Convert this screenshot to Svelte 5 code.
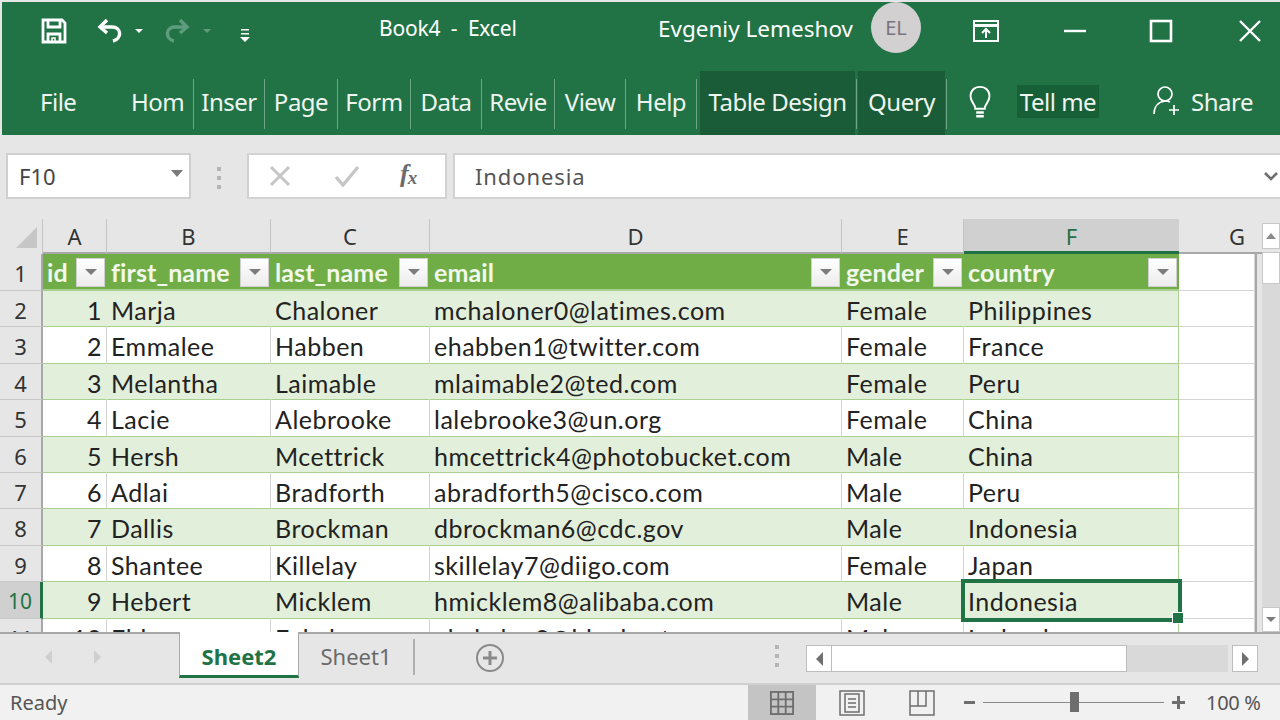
<script>
	const cols = [
		{ l: 'A', w: 64 }, { l: 'B', w: 164 }, { l: 'C', w: 159 },
		{ l: 'D', w: 412 }, { l: 'E', w: 122 }, { l: 'F', w: 215 }, { l: 'G', w: 76 }
	]
	const heads = ['id', 'first_name', 'last_name', 'email', 'gender', 'country']
	const rows = [
		[1, 'Marja', 'Chaloner', 'mchaloner0@latimes.com', 'Female', 'Philippines'],
		[2, 'Emmalee', 'Habben', 'ehabben1@twitter.com', 'Female', 'France'],
		[3, 'Melantha', 'Laimable', 'mlaimable2@ted.com', 'Female', 'Peru'],
		[4, 'Lacie', 'Alebrooke', 'lalebrooke3@un.org', 'Female', 'China'],
		[5, 'Hersh', 'Mcettrick', 'hmcettrick4@photobucket.com', 'Male', 'China'],
		[6, 'Adlai', 'Bradforth', 'abradforth5@cisco.com', 'Male', 'Peru'],
		[7, 'Dallis', 'Brockman', 'dbrockman6@cdc.gov', 'Male', 'Indonesia'],
		[8, 'Shantee', 'Killelay', 'skillelay7@diigo.com', 'Female', 'Japan'],
		[9, 'Hebert', 'Micklem', 'hmicklem8@alibaba.com', 'Male', 'Indonesia'],
		[10, 'Eldon', 'Eykelen', 'ekykelen9@bluehost.com', 'Male', 'Iceland']
	]
	const tabs = [
		['Hom', 72], ['Inser', 71], ['Page', 73], ['Form', 73], ['Data', 71], ['Revie', 73], ['View', 71], ['Help', 71]
	]
</script>

<div class="win">
	<header class="title">
		<div class="qat">
			<svg class="save" width="26" height="26" viewBox="0 0 26 26" fill="none" stroke="#fff" stroke-width="2.8">
				<path d="M2 2h19l3 3v19H2z" />
				<path d="M7 3v6h12V3M7 24v-8h12v8" />
				<path d="M11 24v-4h3v4" stroke-width="1.5" />
			</svg>
			<svg class="undo" width="28" height="26" viewBox="0 0 28 26" fill="none" stroke="#fff" stroke-width="3.400">
				<path d="M11 2 4 9l7 6" />
				<path d="M4 9h12c10 0 10 12 1 14" />
			</svg>
			<i class="tri small"></i>
			<svg class="redo" width="28" height="26" viewBox="0 0 28 26" fill="none" stroke="#5f9c7d" stroke-width="3.400">
				<path d="m17 2 7 7-7 6" />
				<path d="M24 9H12c-10 0-10 12-1 14" />
			</svg>
			<i class="tri small dim"></i>
			<svg class="more" width="12" height="14" viewBox="0 0 12 14" fill="#fff">
				<path d="M2 1h8v1.500H2zM2 5h8v1.500H2zM1 9h10l-5 5z" />
			</svg>
		</div>
		<div class="book">Book4 &nbsp;-&nbsp; Excel</div>
		<div class="user">Evgeniy Lemeshov</div>
		<div class="avatar">EL</div>
		<div class="wctl">
			<svg width="28" height="24" viewBox="0 0 28 24" fill="none" stroke="#fff" stroke-width="2">
				<rect x="2" y="2" width="24" height="20" />
				<path d="M2 6.500h24" stroke-width="3" />
				<path d="M14 19v-8M10 14l4-4 4 4" />
			</svg>
			<svg class="mn" width="22" height="4" viewBox="0 0 22 4"><path d="M0 2h22" stroke="#fff" stroke-width="2.400" /></svg>
			<svg class="mx" width="24" height="24" viewBox="0 0 24 24" fill="none" stroke="#fff" stroke-width="2.600"><rect x="2" y="2" width="20" height="20" /></svg>
			<svg class="cl" width="22" height="22" viewBox="0 0 22 22" fill="none" stroke="#fff" stroke-width="2.400"><path d="m1 1 20 20M21 1 1 21" /></svg>
		</div>
	</header>

	<nav class="ribbon">
		<span class="file">File</span>
		<div class="tabs">
			{#each tabs as [name, w]}
				<span class="tab" style="width:{w}px">{name}</span>
			{/each}
		</div>
		<span class="ctx first">Table Design</span>
		<i class="vsep"></i>
		<span class="ctx second">Query</span>
		<i class="vsep"></i>
		<svg class="bulb" width="26" height="36" viewBox="0 0 24 38" fill="none" stroke="#fff" stroke-width="2">
			<path d="M7 25c0-5-5-7-5-13C2 6 6 2 12 2s10 4 10 10c0 6-5 8-5 13z" />
			<path d="M8 29h8M8 33h8" stroke-width="2.500" />
		</svg>
		<span class="tell">Tell me</span>
		<svg class="person" width="30" height="32" viewBox="0 0 30 32" fill="none" stroke="#fff" stroke-width="1.700">
			<circle cx="12" cy="9" r="7" />
			<path d="M1 29c0-7 4-12 11-13 2 0 4 .5 5 1" />
			<path d="M21 20v10M16 25h10" />
		</svg>
		<span class="share">Share</span>
	</nav>

	<section class="formula">
		<div class="namebox">
			<span>F10</span>
			<i class="tri grey"></i>
		</div>
		<div class="dots"><b></b><b></b><b></b></div>
		<div class="fxbtns">
			<svg width="22" height="22" viewBox="0 0 22 22" fill="none" stroke="#c6c6c6" stroke-width="3"><path d="m2 2 18 18M20 2 2 20" /></svg>
			<svg width="26" height="22" viewBox="0 0 26 22" fill="none" stroke="#c6c6c6" stroke-width="3.400"><path d="m2 12 7 8L24 2" /></svg>
			<span class="fx">f<sub>x</sub></span>
		</div>
		<div class="fbar">
			<span>Indonesia</span>
			<svg width="14" height="9" viewBox="0 0 14 9" fill="none" stroke="#707070" stroke-width="2.600"><path d="m1 1 6 6 6-6" /></svg>
		</div>
	</section>

	<section class="sheet">
		<div class="colheads">
			<div class="corner"><i></i></div>
			{#each cols as c}
				<div class="ch" class:active={c.l === 'F'} class:last={c.l === 'G'} style="width:{c.l === 'G' ? 83 : c.w}px">{c.l}</div>
			{/each}
			<div class="vup"><i class="tri grey up"></i></div>
		</div>
		<div class="body">
			<div class="rowheads">
				{#each { length: 11 } as _, i}
					<div class="rh" class:first={i === 0} class:active={i === 9}>{i + 1}</div>
				{/each}
			</div>
			<div class="cells">
				<div class="row head">
					{#each heads as h, i}
						<div class="cell" style="width:{cols[i].w}px">
							<span>{h}</span>
							<i class="filter"><i class="tri grey"></i></i>
						</div>
					{/each}
					<div class="cell blank" style="width:{cols[6].w}px"></div>
				</div>
				{#each rows as r, ri}
					<div class="row" class:band={ri % 2 === 0}>
						{#each r as v, i}
							<div class="cell" class:num={i === 0} class:sel={ri === 8 && i === 5} style="width:{cols[i].w}px">
								{v}
								{#if ri === 8 && i === 5}<i class="handle"></i>{/if}
							</div>
						{/each}
						<div class="cell blank" style="width:{cols[6].w}px"></div>
					</div>
				{/each}
			</div>
			<div class="vscroll">
				<div class="thumb"></div>
				<div class="vdown"><i class="tri grey"></i></div>
			</div>
		</div>
	</section>

	<section class="sheetbar">
		<div class="nav">
			<i class="arrow left"></i>
			<i class="arrow right"></i>
		</div>
		<div class="stab on">Sheet2</div>
		<div class="stab">Sheet1</div>
		<svg class="add" width="30" height="30" viewBox="0 0 30 30" fill="none" stroke="#8a8a8a">
			<circle cx="15" cy="15" r="13" stroke-width="2" />
			<path d="M15 8v14M8 15h14" stroke-width="3" />
		</svg>
		<div class="dots hdots"><b></b><b></b><b></b></div>
		<div class="hscroll">
			<div class="hbtn"><i class="arrow left dark"></i></div>
			<div class="hthumb"></div>
			<div class="htrack"></div>
			<div class="hbtn"><i class="arrow right dark"></i></div>
		</div>
	</section>

	<footer class="status">
		<span class="ready">Ready</span>
		<div class="views">
			<div class="view on">
				<svg width="24" height="24" viewBox="0 0 26 26" fill="none" stroke="#6e6e6e" stroke-width="2"><rect x="1" y="1" width="24" height="24" /><path d="M9 1v24M17 1v24M1 9h24M1 17h24" /></svg>
			</div>
			<div class="view p2">
				<svg width="26" height="26" viewBox="0 0 26 26" fill="none" stroke="#6e6e6e" stroke-width="1.500"><rect x="1" y="1" width="24" height="24" /><rect x="6" y="4" width="14" height="18" /><path d="M9 9h8M9 13h8M9 17h8" /></svg>
			</div>
			<div class="view p3">
				<svg width="26" height="26" viewBox="0 0 26 26" fill="none" stroke="#6e6e6e" stroke-width="1.500"><rect x="1" y="1" width="24" height="24" /><path d="M1 16h16V1M9 1v15" /></svg>
			</div>
		</div>
		<div class="zoom">
			<i class="zm"></i>
			<div class="slider"><i></i></div>
			<span class="zp"></span>
		</div>
		<span class="pct">100 %</span>
	</footer>
</div>

<style>
	:global(body) {
		margin: 0;
		background: #e6e6e6;
	}
	.win {
		width: 1280px;
		height: 720px;
		display: flex;
		flex-direction: column;
		overflow: hidden;
		font-family: "Noto Sans", sans-serif;
		background: #e6e6e6;
	}
	.tri {
		display: inline-block;
		width: 0;
		height: 0;
		border-left: 5px solid transparent;
		border-right: 5px solid transparent;
		border-top: 5px solid #fff;
	}
	.tri.small {
		border-left-width: 4px;
		border-right-width: 4px;
		border-top-width: 4px;
	}
	.tri.dim {
		border-top-color: #5f9c7d;
	}
	.tri.grey {
		border-top-color: #7c7c7c;
	}
	.tri.up {
		border-top: 0;
		border-bottom: 6px solid #8a8a8a;
	}

	.title {
		height: 69px;
		margin: 2px 0 0 2px;
		padding-bottom: 12px;
		box-sizing: border-box;
		background: #217346;
		display: flex;
		align-items: center;
		color: #fff;
		flex: none;
	}
	.qat {
		display: flex;
		align-items: center;
		width: 377px;
		padding-left: 39px;
		box-sizing: border-box;
	}
	.undo {
		margin-left: 29px;
	}
	.qat .tri {
		margin-left: 11px;
	}
	.redo {
		margin-left: 20px;
	}
	.qat .tri.dim {
		margin-left: 12px;
	}
	.more {
		margin-left: 28px;
		margin-top: 8px;
	}
	.book {
		width: 279px;
		font-size: 21px;
		letter-spacing: -0.2px;
		margin-bottom: 5px;
	}
	.user {
		width: 213px;
		font-size: 22.500px;
		margin-bottom: 5px;
	}
	.avatar {
		width: 50px;
		height: 51px;
		margin-bottom: 6px;
		border-radius: 50%;
		background: #d2d0d0;
		color: #7a7480;
		display: flex;
		align-items: center;
		justify-content: center;
		font-size: 20px;
	}
	.wctl {
		display: flex;
		align-items: center;
		margin-left: 51px;
	}
	.mn {
		margin-left: 64px;
	}
	.mx {
		margin-left: 63px;
	}
	.cl {
		margin-left: 66px;
	}

	.ribbon {
		height: 64px;
		margin-left: 2px;
		background: #217346;
		display: flex;
		align-items: center;
		color: #eef5f0;
		font-size: 24px;
		letter-spacing: -0.5px;
		flex: none;
	}
	.file {
		width: 120px;
		padding: 0 0 3px 38px;
		box-sizing: border-box;
	}
	.tabs {
		display: flex;
		height: 50px;
		align-items: center;
		margin-top: 2px;
	}
	.tab {
		height: 50px;
		line-height: 46px;
		text-align: center;
		box-sizing: border-box;
		white-space: nowrap;
		overflow: hidden;
		border-right: 1px solid #6da586;
	}
	.vsep {
		width: 1px;
		height: 50px;
		margin: 2px 1px 0;
		background: #6da586;
		flex: none;
	}
	.ctx {
		height: 64px;
		line-height: 61px;
		background: #1b5c38;
		text-align: center;
		white-space: nowrap;
		box-sizing: border-box;
	}
	.ctx.first {
		margin-left: 3px;
		width: 155px;
	}
	.ctx.second {
		width: 87px;
	}
	.bulb {
		margin-left: 19px;
	}
	.tell {
		margin: 0 0 4px 24px;
		width: 82px;
		text-align: center;
		background: #175f37;
		line-height: 33px;
	}
	.person {
		margin-left: 54px;
		margin-bottom: 4px;
	}
	.share {
		margin-left: 8px;
		margin-bottom: 4px;
	}

	.formula {
		height: 84px;
		flex: none;
		margin-left: 2px;
		display: flex;
		align-items: flex-start;
		padding: 18px 0 0 4px;
		box-sizing: border-box;
		color: #555;
		font-size: 22px;
	}
	.namebox {
		width: 185px;
		height: 46px;
		box-sizing: border-box;
		background: #fff;
		border: 2px solid #cfcfcf;
		display: flex;
		align-items: center;
		justify-content: space-between;
		padding: 0 6px 0 11px;
		color: #444;
	}
	.namebox .tri {
		border-left-width: 6px;
		border-right-width: 6px;
		border-top-width: 7px;
		margin-top: -5px;
	}
	.dots {
		width: 56px;
		display: flex;
		flex-direction: column;
		align-items: center;
		gap: 5px;
		padding-top: 14px;
		flex: none;
	}
	.dots b {
		width: 4px;
		height: 4px;
		background: #b5b5b5;
	}
	.fxbtns {
		width: 200px;
		height: 46px;
		box-sizing: border-box;
		background: #fff;
		border: 2px solid #d2d2d2;
		display: flex;
		align-items: center;
		padding-left: 20px;
	}
	.fxbtns svg + svg {
		margin-left: 43px;
	}
	.fx {
		margin-left: 40px;
		font-family: "Liberation Serif", serif;
		font-style: italic;
		font-weight: bold;
		font-size: 26px;
		color: #6b6b6b;
		margin-top: -4px;
	}
	.fx sub {
		font-size: 19px;
		vertical-align: -2px;
		margin-left: -1px;
		line-height: 0;
	}
	.fbar {
		margin-left: 6px;
		flex: 1;
		height: 46px;
		box-sizing: border-box;
		background: #fff;
		border: solid #d2d2d2;
		border-width: 2px 0 2px 2px;
		display: flex;
		align-items: center;
		justify-content: space-between;
		padding: 0 2px 0 20px;
		color: #555;
		letter-spacing: 0.9px;
	}

	.sheet {
		height: 413px;
		flex: none;
		overflow: hidden;
		font-family: Lato, sans-serif;
		color: #222;
		font-size: 25px;
		letter-spacing: 0.5px;
	}
	.colheads {
		height: 35px;
		display: flex;
		font-size: 22px;
		letter-spacing: 0;
		font-family: "Noto Sans", sans-serif;
		color: #333;
	}
	.corner {
		width: 43px;
		flex: none;
		position: relative;
		border-right: 1px solid #c4c4c4;
		box-sizing: border-box;
	}
	.corner i {
		position: absolute;
		right: 5px;
		bottom: 6px;
		border-left: 21px solid transparent;
		border-bottom: 21px solid #c6c6c6;
	}
	.ch {
		flex: none;
		box-sizing: border-box;
		text-align: center;
		line-height: 34px;
		border-right: 1px solid #c4c4c4;
		border-bottom: 2px solid #a8a8a8;
	}
	.ch.active {
		background: #d0d0d0;
		color: #217346;
		border-bottom: 3px solid #217346;
		border-right: 0;
	}
	.ch.last {
		border-right: 0;
		padding-left: 33px;
	}
	.vup {
		width: 18px;
		height: 26px;
		margin-top: 4px;
		box-sizing: border-box;
		background: #fff;
		border: 1px solid #c8c8c8;
		display: flex;
		align-items: center;
		justify-content: center;
		flex: none;
	}
	.body {
		display: flex;
		height: 378px;
	}
	.rowheads {
		width: 43px;
		flex: none;
		font-size: 22px;
		letter-spacing: 0;
		font-family: "Noto Sans", sans-serif;
		color: #333;
	}
	.rh {
		height: 36.400px;
		line-height: 39px;
		text-align: center;
		box-sizing: border-box;
		border-bottom: 1px solid #c8c8c8;
		border-right: 2px solid #a8a8a8;
	}
	.rh.first {
		height: 37px;
	}
	.rh.active {
		background: #d0d0d0;
		color: #217346;
		border-right: 3px solid #217346;
		font-size: 21px;
	}
	.cells {
		flex: none;
		width: 1212px;
		background: #fff;
		border-right: 2px solid #a8a8a8;
	}
	.row {
		display: flex;
		height: 36.400px;
		line-height: 39px;
	}
	.row.head {
		height: 37px;
	}
	.row.band .cell:not(.blank) {
		background: #e2efda;
	}
	.cell {
		flex: none;
		box-sizing: border-box;
		padding: 0 4px;
		border-right: 1px solid #d4d4d4;
		border-bottom: 1px solid #d4d4d4;
		white-space: nowrap;
		overflow: hidden;
		position: relative;
	}
	.row.band .cell:not(.blank) {
		border-color: #a9d08e;
		border-right-color: #e2efda;
	}
	.row:not(.band) .cell:not(.blank) {
		border-bottom-color: #a9d08e;
	}
	.row .cell:nth-child(6) {
		border-right-color: #a9d08e;
	}
	.row.band .cell:nth-child(6) {
		border-right-color: #a9d08e;
	}
	.cell.num {
		text-align: right;
	}
	.row.head .cell:not(.blank) {
		background: #70ad47;
		color: #f2f8ec;
		font-weight: bold;
		letter-spacing: 0.1px;
		display: flex;
		align-items: center;
		justify-content: space-between;
		padding: 1px 2px 0 4px;
		border: 0;
		border-bottom: 2px solid #a9d08e;
	}
	.filter {
		width: 29px;
		height: 29px;
		box-sizing: border-box;
		background: linear-gradient(#fff, #ececec);
		border: 1px solid #d0d0d0;
		display: flex;
		align-items: center;
		justify-content: center;
		flex: none;
	}
	.filter .tri {
		border-left-width: 6px;
		border-right-width: 6px;
		border-top-width: 6px;
	}
	.cell.sel {
		overflow: visible;
		z-index: 2;
		outline: 4px solid #217346;
		outline-offset: -1px;
	}
	.handle {
		position: absolute;
		right: -6px;
		bottom: -6px;
		width: 12px;
		height: 12px;
		background: #217346;
		border: 1px solid #fff;
		box-sizing: border-box;
	}
	.vscroll {
		width: 18px;
		margin-left: 5px;
		flex: none;
		background: #d9d9d9;
		position: relative;
	}
	.thumb {
		width: 18px;
		height: 32px;
		margin-top: -2px;
		box-sizing: border-box;
		background: #fff;
		border: 1px solid #c8c8c8;
	}
	.vdown {
		position: absolute;
		left: 0;
		bottom: 0;
		width: 18px;
		height: 25px;
		box-sizing: border-box;
		background: #fff;
		border: 1px solid #c8c8c8;
		display: flex;
		align-items: center;
		justify-content: center;
	}

	.sheetbar {
		height: 53px;
		flex: none;
		display: flex;
		align-items: flex-start;
		border-top: 2px solid #a8a8a8;
		box-sizing: border-box;
		font-size: 22px;
		border-bottom: 2px solid #d0d0d0;
	}
	.nav {
		width: 179px;
		height: 46px;
		display: flex;
		align-items: center;
		padding-left: 45px;
		gap: 42px;
		box-sizing: border-box;
		flex: none;
	}
	.arrow {
		width: 0;
		height: 0;
		border-top: 7px solid transparent;
		border-bottom: 7px solid transparent;
		display: inline-block;
	}
	.arrow.left {
		border-right: 7px solid #cfcfcf;
	}
	.arrow.right {
		border-left: 7px solid #cfcfcf;
	}
	.arrow.left.dark {
		border-right-color: #707070;
	}
	.arrow.right.dark {
		border-left-color: #707070;
	}
	.stab {
		width: 116px;
		text-align: center;
		color: #6a6a6a;
		flex: none;
		box-sizing: border-box;
		border-right: 2px solid #b0b0b0;
		margin-top: 5px;
		line-height: 35px;
		height: 36px;
	}
	.stab.on {
		width: 120px;
		height: 46px;
		margin-top: -2px;
		line-height: 48px;
		background: #fff;
		color: #217346;
		font-weight: bold;
		border: 1px solid #a8a8a8;
		border-top: 0;
		border-bottom: 3px solid #217346;
	}
	.add {
		margin: 9px 0 0 60px;
	}
	.hdots {
		width: auto;
		margin-left: 270px;
		padding-top: 11px;
	}
	.hscroll {
		margin: 11px 0 0 27px;
		display: flex;
		height: 27px;
	}
	.hbtn {
		width: 26px;
		box-sizing: border-box;
		background: #fff;
		border: 1px solid #bdbdbd;
		display: flex;
		align-items: center;
		justify-content: center;
	}
	.hthumb {
		width: 295px;
		background: #fff;
		border: 1px solid #bdbdbd;
		border-left: 0;
		box-sizing: border-box;
	}
	.htrack {
		width: 101px;
		background: #d9d9d9;
		margin-right: 4px;
	}

	.status {
		height: 35px;
		flex: none;
		background: #f1f1f1;
		display: flex;
		align-items: center;
		font-size: 20px;
		color: #555;
	}
	.ready {
		width: 748px;
		padding-left: 10px;
		box-sizing: border-box;
		flex: none;
	}
	.views {
		display: flex;
		height: 35px;
		flex: none;
		width: 216px;
	}
	.view {
		width: 68px;
		display: flex;
		align-items: center;
		justify-content: center;
	}
	.view.p2 {
		width: 72px;
	}
	.view.p3 {
		width: 68px;
	}
	.view.on {
		background: #c4c4c4;
	}
	.zoom {
		display: flex;
		align-items: center;
		flex: none;
	}
	.zm {
		width: 11px;
		height: 3px;
		background: #6e6e6e;
	}
	.slider {
		width: 181px;
		height: 1px;
		background: #8a8a8a;
		margin-left: 8px;
		position: relative;
	}
	.slider i {
		position: absolute;
		left: 87px;
		top: -10px;
		width: 9px;
		height: 20px;
		background: #6e6e6e;
	}
	.zp {
		width: 13px;
		height: 13px;
		margin-left: 8px;
		background:
			linear-gradient(#6e6e6e, #6e6e6e) center / 100% 3px no-repeat,
			linear-gradient(#6e6e6e, #6e6e6e) center / 3px 100% no-repeat;
	}
	.pct {
		margin-left: 21px;
		letter-spacing: -0.3px;
	}
</style>
